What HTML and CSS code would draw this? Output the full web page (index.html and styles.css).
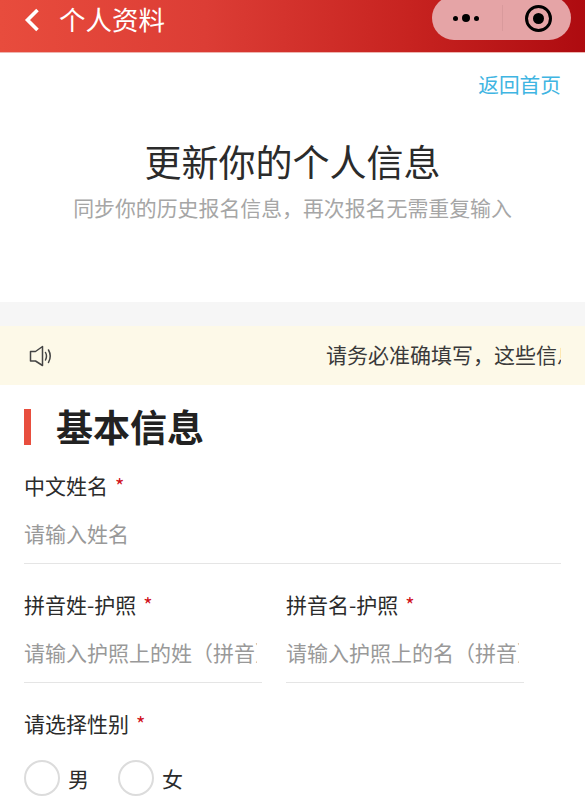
FILE: index.html
```html
<!DOCTYPE html>
<html lang="zh-CN">
<head>
<meta charset="utf-8">
<title>个人资料</title>
<link rel="stylesheet" href="styles.css">
</head>
<body>
<div class="page">
  <header class="navbar">
    <div class="nav-left">
      <svg class="back" viewBox="0 0 16 24" width="16" height="24"><path d="M13.5 2 L3.5 12 L13.5 22" fill="none" stroke="#fff" stroke-width="3.6"/></svg>
      <span class="nav-title">个人资料</span>
    </div>
    <div class="capsule">
      <div class="dots"><i class="dot"></i><i class="dot big"></i><i class="dot"></i></div>
      <i class="divider"></i>
      <div class="target"><i class="target-dot"></i></div>
    </div>
  </header>

  <section class="intro">
    <a class="home-link">返回首页</a>
    <h1 class="intro-title">更新你的个人信息</h1>
    <p class="intro-sub">同步你的历史报名信息，再次报名无需重复输入</p>
  </section>

  <div class="band"></div>

  <div class="notice">
    <svg class="speaker" viewBox="0 0 24 22" width="24" height="22"><path d="M1.5 6.5 H6.5 L13.5 1.5 V20.5 L6.5 16 H1.5 Z" fill="none" stroke="#444" stroke-width="1.5" stroke-linejoin="round"/><path d="M16.5 7.5 Q18.5 11 16.5 15" fill="none" stroke="#444" stroke-width="1.5" stroke-linecap="round"/><path d="M19.5 5 Q23 11 19.5 17.5" fill="none" stroke="#444" stroke-width="1.5" stroke-linecap="round"/></svg>
    <div class="notice-track"><span class="notice-text">请务必准确填写，这些信息将用于报名</span></div>
  </div>

  <main class="form">
    <h2 class="section-title"><i class="section-bar"></i>基本信息</h2>

    <div class="field first">
      <div class="label">中文姓名<span class="req">*</span></div>
      <div class="input"><span class="placeholder">请输入姓名</span></div>
    </div>

    <div class="field-row">
      <div class="field half">
        <div class="label">拼音姓-护照<span class="req">*</span></div>
        <div class="input"><span class="placeholder clip">请输入护照上的姓（拼音）</span></div>
      </div>
      <div class="field half">
        <div class="label">拼音名-护照<span class="req">*</span></div>
        <div class="input"><span class="placeholder clip">请输入护照上的名（拼音）</span></div>
      </div>
    </div>

    <div class="field gender">
      <div class="label">请选择性别<span class="req">*</span></div>
      <div class="radios">
        <label class="radio"><i class="circle"></i>男</label>
        <label class="radio"><i class="circle"></i>女</label>
      </div>
    </div>
  </main>
</div>
</body>
</html>
```
FILE: styles.css
```css
* { box-sizing: border-box; }
html, body { margin: 0; padding: 0; background: #fff; }
body { font-family: "Noto Sans CJK SC", "Noto Sans", sans-serif; color: #2b2b2b; }
.page { width: 585px; height: 800px; overflow: hidden; }

.navbar {
  height: 53px;
  display: flex;
  justify-content: space-between;
  align-items: flex-start;
  padding: 0 14px 0 24px;
  background: linear-gradient(90deg, #e84c3d 0%, #dc3d35 35%, #c72320 70%, #ae0b10 100%);
  border-bottom: 1px solid #eeb5b0;
  overflow: hidden;
}
.nav-left { display: flex; align-items: center; height: 40px; gap: 19px; }
.back { display: block; }
.nav-title { font-size: 26.5px; line-height: 40px; margin-bottom: 2px; color: #fff; }
.capsule {
  width: 139px;
  height: 44px;
  margin-top: -4px;
  border-radius: 22px;
  background: #e5a4a6;
  display: flex;
  align-items: center;
  padding-left: 21px;
}
.dots { display: flex; align-items: center; gap: 4px; width: 28px; }
.dot { width: 5px; height: 5px; border-radius: 50%; background: #000; }
.dot.big { width: 8px; height: 8px; }
.divider { width: 1px; height: 26px; background: #d99a9c; margin-left: 21px; }
.target {
  width: 27px; height: 27px; margin-left: 22px;
  border: 3px solid #000; border-radius: 50%;
  display: flex; align-items: center; justify-content: center;
}
.target-dot { width: 11px; height: 11px; border-radius: 50%; background: #000; }

.intro { height: 249px; padding: 17px 24px 0; display: flex; flex-direction: column; align-items: center; }
.home-link { align-self: flex-end; font-size: 20.7px; line-height: 28px; color: #3fb5e2; }
.intro-title { margin: 38px 0 0; font-size: 37px; line-height: 50px; font-weight: 400; color: #2b2b2b; }
.intro-sub { margin: 6px 0 0; font-size: 20.9px; line-height: 30px; color: #a6a6a6; white-space: nowrap; }

.band { height: 24px; background: #f6f6f6; }

.notice { height: 59px; background: #fdf9e8; display: flex; align-items: center; padding: 0 24px 0 29px; }
.speaker { display: block; flex: none; }
.notice-track { flex: 1; margin-bottom: 4px; overflow: hidden; padding-left: 273px; white-space: nowrap; }
.notice-text { font-size: 21px; line-height: 30px; color: #3a3a3a; }

.form { padding: 0 24px; }
.section-title {
  margin: 16px 0 0;
  height: 50px;
  display: flex;
  align-items: center;
  font-size: 37px;
  line-height: 50px;
  font-weight: 700;
  color: #222;
}
.section-bar { width: 7px; height: 36px; margin-top: 2px; background: #e84e3e; margin-right: 25px; }

.field { margin-top: 25px; }
.field.first { margin-top: 19px; }
.label { font-size: 21px; line-height: 30px; color: #2b2b2b; }
.req { margin-left: 7px; color: #d0101a; font-size: 20px; }
.input { height: 59px; margin-top: 4px; padding: 13px 0 0; border-bottom: 1px solid #e5e5e5; }
.placeholder { display: block; font-size: 21px; line-height: 30px; color: #999; white-space: nowrap; }
.clip { overflow: hidden; width: 233px; }

.field-row { display: flex; gap: 24px; }
.half { width: 238px; }

.radios { display: flex; gap: 29px; margin-top: 21px; }
.radio { display: flex; align-items: center; gap: 8px; font-size: 21px; line-height: 36px; color: #2b2b2b; }
.circle { width: 36px; height: 36px; border: 2px solid #dcdcdc; border-radius: 50%; }
```
